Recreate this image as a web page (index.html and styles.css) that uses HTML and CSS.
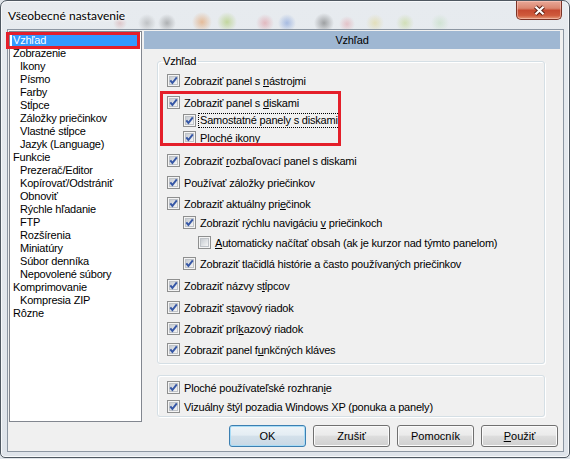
FILE: index.html
```html
<!DOCTYPE html>
<html lang="sk">
<head>
    <meta charset="UTF-8">
    <meta name="viewport" content="width=device-width, initial-scale=1.0">
    <title>Všeobecné nastavenie</title>
    <link rel="stylesheet" href="styles.css">
</head>
<body>

    <!-- shared checkbox drawings -->
    <svg class="defs" width="0" height="0">
        <defs>
            <linearGradient id="boxfill" x1="0" y1="0" x2="1" y2="1">
                <stop offset="0" stop-color="#c4c9cf"/>
                <stop offset="1" stop-color="#f8f8f8"/>
            </linearGradient>
            <symbol id="box" viewBox="0 0 13 13">
                <rect x="0.5" y="0.5" width="12" height="12" fill="#f4f4f4" stroke="#8e8f8f"/>
                <rect x="2.5" y="2.5" width="8" height="8" fill="url(#boxfill)" stroke="#bfc3c8"/>
            </symbol>
            <symbol id="chk" viewBox="0 0 13 13">
                <rect x="0.5" y="0.5" width="12" height="12" fill="#f4f4f4" stroke="#8e8f8f"/>
                <rect x="2.5" y="2.5" width="8" height="8" fill="url(#boxfill)" stroke="#bfc3c8"/>
                <path d="M3.3 6.4 L5.4 9 L9.8 3.3" fill="none" stroke="#3657a6" stroke-width="2"/>
            </symbol>
        </defs>
    </svg>

    <div class="window">
        <div class="titlebar">
            <span class="title">Všeobecné nastavenie</span>
            <button class="close">
                <svg width="13" height="11" viewBox="0 0 13 11">
                    <path d="M2.5 1.8 L10.5 9.2 M10.5 1.8 L2.5 9.2" stroke="#5b2116" stroke-width="4.2"/>
                    <path d="M2.5 1.8 L10.5 9.2 M10.5 1.8 L2.5 9.2" stroke="#fff" stroke-width="2.2"/>
                </svg>
            </button>
        </div>

        <div class="client">
            <div class="main">
                <!-- Section tree -->
                <ul class="tree">
                    <li class="selected">Vzhľad</li>
                    <li>Zobrazenie</li>
                    <li class="sub">Ikony</li>
                    <li class="sub">Písmo</li>
                    <li class="sub">Farby</li>
                    <li class="sub">Stĺpce</li>
                    <li class="sub">Záložky priečinkov</li>
                    <li class="sub">Vlastné stĺpce</li>
                    <li class="sub">Jazyk (Language)</li>
                    <li>Funkcie</li>
                    <li class="sub">Prezerač/Editor</li>
                    <li class="sub">Kopírovať/Odstrániť</li>
                    <li class="sub">Obnoviť</li>
                    <li class="sub">Rýchle hľadanie</li>
                    <li class="sub">FTP</li>
                    <li class="sub">Rozšírenia</li>
                    <li class="sub">Miniatúry</li>
                    <li class="sub">Súbor denníka</li>
                    <li class="sub">Nepovolené súbory</li>
                    <li>Komprimovanie</li>
                    <li class="sub">Kompresia ZIP</li>
                    <li>Rôzne</li>
                </ul>

                <!-- Settings page -->
                <div class="page">
                    <div class="page-head">Vzhľad</div>
                    <div class="page-body">
                        <fieldset class="group">
                            <legend>Vzhľad</legend>
                            <div class="row"><svg class="cb"><use href="#chk"/></svg><span>Zobraziť panel s <u>n</u>ástrojmi</span></div>
                            <div class="row gap-l"><svg class="cb"><use href="#chk"/></svg><span>Zobraziť panel s <u>d</u>iskami</span></div>
                            <div class="row l1 gap-s"><svg class="cb"><use href="#chk"/></svg><span class="focus">Samostatné panely s diskami</span></div>
                            <div class="row l1 gap-xs"><svg class="cb"><use href="#chk"/></svg><span>Ploché ikony</span></div>
                            <div class="row gap-xl"><svg class="cb"><use href="#chk"/></svg><span>Zobraziť <u>r</u>ozbaľovací panel s diskami</span></div>
                            <div class="row gap-l"><svg class="cb"><use href="#chk"/></svg><span>Používať záložky priečinkov</span></div>
                            <div class="row"><svg class="cb"><use href="#chk"/></svg><span>Zobraziť aktuálny pri<u>e</u>činok</span></div>
                            <div class="row l1 gap-m"><svg class="cb"><use href="#chk"/></svg><span>Zobraziť rýchlu navigáciu <u>v</u> priečinkoch</span></div>
                            <div class="row l2 gap-n"><svg class="cb"><use href="#box"/></svg><span><u>A</u>utomaticky načítať obsah (ak je kurzor nad týmto panelom)</span></div>
                            <div class="row l1"><svg class="cb"><use href="#chk"/></svg><span>Zobraziť tlačidlá histórie a často používaných priečinkov</span></div>
                            <div class="row gap-l"><svg class="cb"><use href="#chk"/></svg><span>Zobraziť názvy s<u>t</u>ĺpcov</span></div>
                            <div class="row gap-l"><svg class="cb"><use href="#chk"/></svg><span>Zobraziť s<u>t</u>avový riadok</span></div>
                            <div class="row"><svg class="cb"><use href="#chk"/></svg><span>Zobraziť prí<u>k</u>azový riadok</span></div>
                            <div class="row"><svg class="cb"><use href="#chk"/></svg><span>Zobraziť panel f<u>u</u>nkčných kláves</span></div>
                        </fieldset>

                        <fieldset class="group plain">
                            <div class="row"><svg class="cb"><use href="#chk"/></svg><span>Ploché používateľské rozhran<u>i</u>e</span></div>
                            <div class="row gap-m"><svg class="cb"><use href="#chk"/></svg><span>Vizuálny štýl pozadia Windows XP (ponuka a panely)</span></div>
                        </fieldset>
                    </div>
                </div>
            </div>

            <div class="buttons">
                <button class="btn default">OK</button>
                <button class="btn">Zrušiť</button>
                <button class="btn">Pomocník</button>
                <button class="btn"><u>P</u>oužiť</button>
            </div>
        </div>

        <!-- red annotation frames drawn over the dialog -->
        <div class="mark mark-tree"></div>
        <div class="mark mark-disks"></div>
    </div>

</body>
</html>
```

FILE: styles.css
```css
* {
    box-sizing: border-box;
}
body {
    margin: 0;
    background: #dfe4e9;
    font-family: "Liberation Sans", Arial, sans-serif;
    font-size: 11px;
    letter-spacing: -0.2px;
    color: #000;
}
.defs {
    position: absolute;
}
.window {
    position: relative;
    width: 570px;
    height: 458px;
    display: flex;
    flex-direction: column;
    padding: 0 5px 5px 6px;
    border: 1px solid #4f5861;
    border-radius: 7px 7px 5px 5px;
    background: linear-gradient(#e7ebef, #dfe4ea);
    box-shadow: inset 0 0 0 1px #f7f9fb;
}

/* Title bar */
.titlebar {
    height: 28px;
    display: flex;
    justify-content: space-between;
    align-items: flex-start;
    background:
        radial-gradient(circle 7px at 113px 22px, rgba(200, 90, 90, 0.25), transparent),
        radial-gradient(circle 9px at 140px 22px, rgba(120, 120, 120, 0.35), transparent),
        radial-gradient(circle 9px at 160px 22px, rgba(90, 90, 90, 0.4), transparent),
        radial-gradient(circle 10px at 195px 21px, rgba(225, 130, 50, 0.45), transparent),
        radial-gradient(circle 10px at 220px 21px, rgba(150, 190, 60, 0.45), transparent),
        radial-gradient(circle 9px at 258px 22px, rgba(220, 110, 120, 0.4), transparent),
        radial-gradient(circle 9px at 280px 22px, rgba(90, 130, 210, 0.45), transparent),
        radial-gradient(circle 10px at 317px 22px, rgba(70, 70, 70, 0.45), transparent),
        radial-gradient(circle 8px at 340px 23px, rgba(220, 100, 110, 0.3), transparent),
        radial-gradient(circle 9px at 368px 22px, rgba(220, 200, 90, 0.35), transparent),
        radial-gradient(circle 9px at 398px 22px, rgba(170, 200, 80, 0.35), transparent),
        radial-gradient(circle 9px at 433px 22px, rgba(160, 210, 150, 0.3), transparent);
}
.title {
    padding: 7px 0 0 1px;
    font-family: Lato, "Noto Sans", sans-serif;
    font-size: 12px;
    letter-spacing: 0;
    text-shadow: 0 0 5px #fff, 0 0 3px #fff;
}
.close {
    width: 46px;
    height: 19px;
    margin-right: 2px;
    padding: 0;
    display: flex;
    align-items: center;
    justify-content: center;
    border: 1px solid #7b3326;
    border-top: none;
    border-radius: 0 0 5px 5px;
    background: linear-gradient(#e9a898 0%, #db8770 40%, #c64a31 52%, #cf5a3c 80%, #e59a79 100%);
    box-shadow: inset 0 0 0 1px rgba(255, 210, 200, 0.5);
}

/* Client area */
.client {
    height: 423px;
    padding: 1px 0 0 1px;
    border: 1px solid #8c96a2;
    background: #f0f0f0;
}
.main {
    display: flex;
    height: 391px;
}
.tree {
    list-style: none;
    margin: 0;
    padding: 2px 0 0;
    width: 133px;
    height: 391px;
    background: #fff;
    border: 1px solid #828790;
}
.tree li {
    height: 13px;
    line-height: 13px;
    padding-left: 3px;
    white-space: nowrap;
}
.tree li.sub {
    padding-left: 10px;
}
.tree li.selected {
    margin: 0 4px 0 2px;
    padding-left: 1px;
    background: #3399ff;
    color: #fff;
}

.page {
    width: 416px;
    margin-left: 2px;
}
.page-head {
    height: 18px;
    line-height: 18px;
    text-align: center;
    background: #9fb7d2;
}
.page-body {
    padding: 6px 0 0 13px;
}
.group {
    margin: 0;
    width: 388px;
    padding: 6px 0 7px 9px;
    border: 1px solid #d5dfe5;
    border-radius: 3px;
    box-shadow: inset 1px 1px 0 #fff, 1px 1px 0 #fff;
    min-inline-size: auto;
}
.group legend {
    margin-left: -6px;
    padding: 0 2px;
    height: 13px;
    line-height: 13px;
}
.group.plain {
    margin-top: 11px;
    padding: 5px 0 3px 9px;
}
.row {
    display: flex;
    align-items: center;
    height: 13px;
    margin-top: 8px;
    white-space: nowrap;
}
.group .row:first-of-type {
    margin-top: 0;
}
.row.gap-xs { margin-top: 4px; }
.row.gap-s { margin-top: 5px; }
.row.gap-m { margin-top: 6px; }
.row.gap-n { margin-top: 7px; }
.row.gap-l { margin-top: 9px; }
.row.gap-xl { margin-top: 10px; }
.row.l1 {
    padding-left: 16px;
}
.row.l2 {
    padding-left: 31px;
}
.cb {
    flex: none;
    width: 13px;
    height: 13px;
    margin-right: 4px;
}
.focus {
    margin-left: -2px;
    padding: 0 1px;
    line-height: 13px;
    border: 1px dotted #000;
}

/* Dialog buttons */
.buttons {
    display: flex;
    justify-content: flex-end;
    gap: 7px;
    margin-top: 3px;
    padding-right: 5px;
}
.btn {
    width: 77px;
    height: 22px;
    padding: 0;
    font: inherit;
    color: #000;
    border: 1px solid #707070;
    border-radius: 3px;
    background: linear-gradient(#f2f2f2 0%, #ebebeb 45%, #dddddd 52%, #cfcfcf 100%);
    box-shadow: inset 0 0 0 1px #fbfbfb;
}
.btn.default {
    border-color: #3c7fb1;
    background: linear-gradient(#eef4f8 0%, #e4edf3 45%, #d3e0ea 52%, #c8d8e5 100%);
    box-shadow: inset 0 0 0 1px #a9dcf6;
}

/* Red annotation frames */
.mark {
    position: absolute;
    border: 3px solid #e41f2a;
}
.mark-tree {
    left: 5px;
    top: 31px;
    width: 134px;
    height: 17px;
}
.mark-disks {
    left: 159px;
    top: 90px;
    width: 181px;
    height: 55px;
}
```
